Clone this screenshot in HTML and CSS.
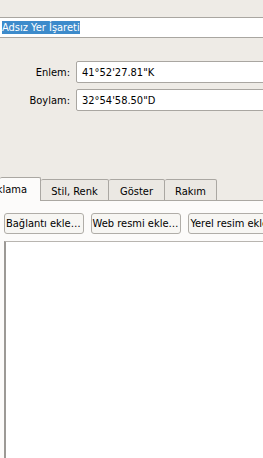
FILE: index.html
```html
<!DOCTYPE html>
<html lang="tr">
<head>
  <meta charset="UTF-8"/>
  <title>Yer İşareti</title>
  <link rel="stylesheet" href="styles.css">
</head>
<body>

  <!-- Name -->
  <div class="name"><span class="sel">Adsız Yer İşareti</span></div>

  <!-- Coordinates -->
  <div class="coords">
    <label>Enlem:</label>
    <div class="field">41°52'27.81"K</div>
    <label>Boylam:</label>
    <div class="field">32°54'58.50"D</div>
  </div>

  <!-- Tabs -->
  <div class="tabs">
    <div class="tab active"><span>Açıklama</span></div>
    <div class="tab">Stil, Renk</div>
    <div class="tab">Göster</div>
    <div class="tab">Rakım</div>
    <div class="tab-rest"></div>
  </div>

  <div class="pane">
    <div class="buttons">
      <button>Bağlantı ekle…</button>
      <button>Web resmi ekle…</button>
      <button>Yerel resim ekle…</button>
    </div>
    <div class="editor"></div>
  </div>

</body>
</html>
```

FILE: styles.css
```css
* {
  box-sizing: border-box;
  margin: 0; padding: 0;
}

body {
  background: #eeebe6;
  font-family: "DejaVu Sans Condensed", "DejaVu Sans", sans-serif;
  font-size: 11px;
  color: #000;
  width: 263px;
  height: 458px;
  overflow: hidden;
}

.name {
  margin-top: 17px;
  margin-left: -1px;
  width: 300px;
  height: 21px;
  background: #fff;
  border-top: 1px solid #a9a6a1;
  border-bottom: 1px solid #a9a6a1;
  padding: 3px 0 0 3px;
  line-height: 13px;
}

.sel {
  display: inline-block;
  background: #3d8bcb;
  color: #fff;
  height: 13px;
}

.coords {
  margin-top: 23px;
  display: grid;
  grid-template-columns: 70px 300px;
  column-gap: 6px;
  row-gap: 6px;
  align-items: center;
  overflow: hidden;
}

.coords label {
  text-align: right;
}

.field {
  height: 22px;
  background: #fff;
  border: 1px solid #a9a6a1;
  border-radius: 2px;
  padding: 4px 0 0 5px;
}

.tabs {
  margin-top: 66px;
  display: flex;
  align-items: flex-end;
  height: 24px;
  overflow: hidden;
}

.tab {
  flex: none;
  height: 22px;
  padding: 5px 0 0;
  text-align: center;
  background: #ebe8e3;
  border: 1px solid #aaa7a2;
  border-left: none;
  border-radius: 2px 2px 0 0;
}

.tab:nth-child(2) { width: 68px; }
.tab:nth-child(3) { width: 56px; }
.tab:nth-child(4) { width: 52px; }

.tab.active {
  width: 41px;
  height: 24px;
  padding-top: 5px;
  background: #fcfbfa;
  border-bottom: none;
  text-align: right;
  overflow: hidden;
  white-space: nowrap;
  direction: rtl;
}

.tab.active span {
  padding-right: 13px;
  direction: ltr;
  unicode-bidi: isolate;
}

.tab-rest {
  flex: 1;
  border-bottom: 1px solid #aaa7a2;
}

.pane {
  background: #fcfbfa;
  height: 300px;
  padding: 12px 0 0 4px;
  overflow: hidden;
}

.buttons {
  display: flex;
  gap: 7px;
  white-space: nowrap;
}

button {
  flex: none;
  height: 21px;
  padding: 0 2px 0 1px;
  background: #f7f6f3;
  border: 1px solid #b0ada8;
  border-radius: 3px;
  font-family: "DejaVu Sans Condensed", "DejaVu Sans", sans-serif;
  font-size: 11px;
  color: #000;
}

.editor {
  margin-top: 7px;
  height: 240px;
  width: 300px;
  background: #fff;
  border-left: 2px solid #9c9995;
  border-top: 1px solid #b8b5b0;
}
```
